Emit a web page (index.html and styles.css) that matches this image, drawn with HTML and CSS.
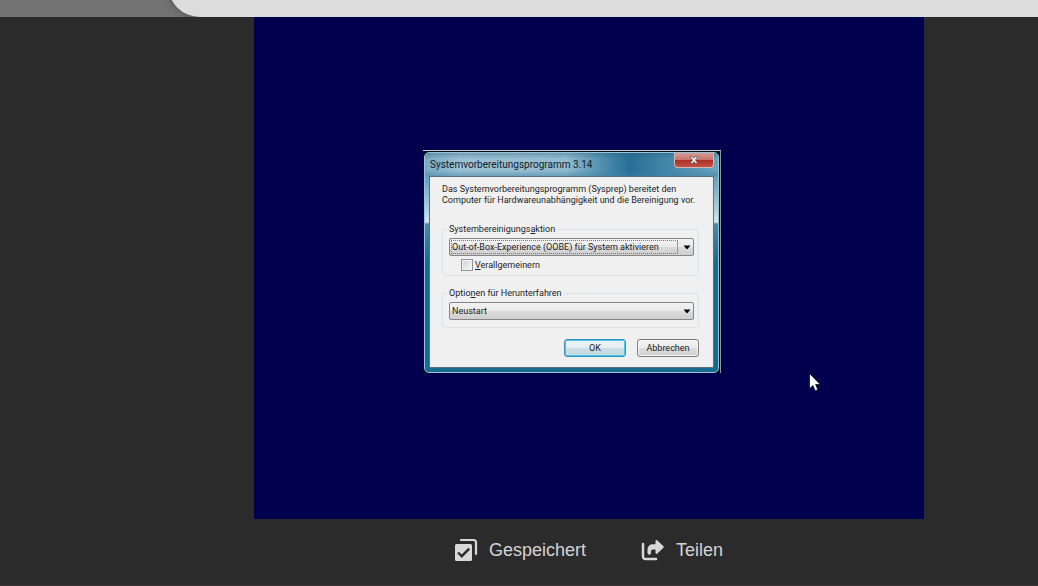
FILE: index.html
```html
<!DOCTYPE html>
<html lang="de">
<head>
<meta charset="utf-8">
<title>Systemvorbereitungsprogramm</title>
<link rel="stylesheet" href="styles.css">
</head>
<body>
<header class="topbar"><div class="topbar-sheet"></div></header>
<main class="stage">
  <section class="desktop">
    <div class="window-frame">
      <form class="window">
        <div class="titlebar">
          <h1 class="title">Systemvorbereitungsprogramm 3.14</h1>
          <button class="close" type="button" aria-label="Schließen">
            <svg width="10" height="8" viewBox="0 0 10 8"><path d="M1 .5h2.500L5 2.400 6.500.500H9L6.400 4 9 7.500H6.500L5 5.600 3.500 7.500H1L3.600 4z" fill="#fff" stroke="#5d4a50" stroke-width=".7"/></svg>
          </button>
        </div>
        <div class="client">
          <p class="intro">Das Systemvorbereitungsprogramm (Sysprep) bereitet den<br>Computer für Hardwareunabhängigkeit und die Bereinigung vor.</p>
          <fieldset class="group">
            <legend><label for="action">Systembereinigungs<u>a</u>ktion</label></legend>
            <div class="combo combo-focus">
              <select id="action"><option>Out-of-Box-Experience (OOBE) für System aktivieren</option></select>
              <svg class="arrow" width="8" height="5" viewBox="0 0 8 5"><path d="M.5.500h7L4 4.500z"/></svg>
            </div>
            <label class="check"><input type="checkbox"><span><u>V</u>erallgemeinern</span></label>
          </fieldset>
          <fieldset class="group group-shutdown">
            <legend><label for="shutdown">Optio<u>n</u>en für Herunterfahren</label></legend>
            <div class="combo">
              <select id="shutdown"><option>Neustart</option></select>
              <svg class="arrow" width="8" height="5" viewBox="0 0 8 5"><path d="M.5.500h7L4 4.500z"/></svg>
            </div>
          </fieldset>
          <div class="buttons">
            <button class="btn btn-default" type="button">OK</button>
            <button class="btn" type="button">Abbrechen</button>
          </div>
        </div>
      </form>
    </div>
    <svg class="cursor" width="12" height="19" viewBox="0 0 12 19"><path d="M.5.500v15.200l3.400-3.200 2.300 5.300 2.700-1.100-2.300-5.200h4.700z" fill="#fff" stroke="#000" stroke-width=".7"/></svg>
  </section>
</main>
<footer class="actions">
  <button class="action" type="button">
    <svg width="24" height="24" viewBox="0 0 24 24" fill="none"><path d="M7 2h12.500a2.500 2.500 0 0 1 2.500 2.500V16" stroke="#d8d8d8" stroke-width="2.200" stroke-linecap="round"/><rect x="1" y="6" width="17" height="17" rx="1.500" fill="#d8d8d8"/><path d="M4 14.500l3.800 3.700 7.400-7.600" stroke="#2b2b2b" stroke-width="2.400"/></svg>
    <span>Gespeichert</span>
  </button>
  <button class="action" type="button">
    <svg width="24" height="24" viewBox="0 0 24 24" fill="none"><path d="M2 6v12.500A2.500 2.500 0 0 0 4.500 21H15" stroke="#d8d8d8" stroke-width="2.500" stroke-linecap="round"/><path d="M14.500 3a1 1 0 0 1 1.600-.7l6.400 6a1 1 0 0 1 0 1.400l-6.400 6a1 1 0 0 1-1.600-.7v-3.500h-2.300c-1.600 0-2.200.7-2.200 2v1.500a1.500 1.500 0 0 1-3.500 0V12c0-3.700 2.300-5.700 5.700-5.700h2.300z" fill="#d8d8d8"/></svg>
    <span>Teilen</span>
  </button>
</footer>
</body>
</html>
```
FILE: styles.css
```css
* { box-sizing: border-box; }
body {
  margin: 0;
  min-height: 100vh;
  display: flex;
  flex-direction: column;
  background: #2b2b2b;
  border-bottom: 1px solid #3a3436;
  font-family: "Liberation Sans", Arial, sans-serif;
}
.topbar {
  height: 17px;
  padding-left: 168px;
  overflow: hidden;
  display: flex;
  align-items: flex-end;
  background: #737373;
}
.topbar-sheet {
  flex: 1;
  height: 64px;
  border-bottom-left-radius: 32px;
  background: #dcdcdc;
  box-shadow: 0 0 8px rgba(0, 0, 0, .3);
}
.stage {
  flex: 1;
  display: flex;
  padding: 0 114px 0 254px;
}
.desktop { flex: 1; position: relative; background: #00004c; }
.window-frame {
  position: absolute;
  left: 169px;
  top: 133px;
  width: 298px;
  padding: 1px 1px 0;
  border-top: 1px solid #c8d0d8;
  border-right: 1px solid #8d98a4;
  background: #001018;
}
.window {
  padding: 0 4px 4px;
  border: 1px solid #9cc4d4;
  border-radius: 5px;
  background:
    linear-gradient(180deg, #3c7896 0, #62a0bc 24px, #b9d5e2 60px, #d8e8f0 69px, #4c8ba8 71px, #176a90 110px, #176a90 100%);
  font-family: Roboto, "Noto Sans", sans-serif;
  font-size: 9px;
  line-height: 11px;
  color: #1c1c24;
}
.titlebar {
  height: 23px;
  margin: 0 -4px;
  padding-left: 5px;
  display: flex;
  justify-content: space-between;
  border-radius: 4px 4px 0 0;
  background:
    linear-gradient(180deg, rgba(30, 90, 120, .35) 0, rgba(30, 90, 120, 0) 6px, rgba(30, 90, 120, 0) 17px, rgba(60, 130, 165, .5) 100%),
    linear-gradient(90deg, #79a9c0 0, #9dc1d3 12%, #94bbcf 48%, #5290b0 60%, #286e94 70%, #3f82a5 80%, #6ba2bd 100%);
}
.title { margin: 0; font-size: 10px; font-weight: 400; line-height: 23px; color: #10202c; }
.close {
  width: 40px;
  height: 15px;
  margin-right: 4px;
  padding: 0;
  display: flex;
  align-items: center;
  justify-content: center;
  border: 1px solid #d9b6b4;
  border-top: 0;
  border-radius: 0 0 4px 4px;
  background: linear-gradient(#d49a93 0, #c9776e 48%, #a92f25 50%, #c25042 100%);
}
.client {
  padding: 7px 14px 10px 12px;
  border: 1px solid #54707e;
  background: #f0f0f0;
}
.intro { margin: 0 0 18px; white-space: nowrap; }
.group {
  min-width: 0;
  margin: 0;
  padding: 3px 4px 4px 6px;
  border: 1px solid #dbe4ea;
  border-radius: 3px;
}
.group legend { padding: 0 2px 0 0; }
.group-shutdown { margin-top: 12px; padding-bottom: 7px; }
.combo { position: relative; display: flex; }
.combo select {
  flex: 1;
  min-width: 0;
  height: 18px;
  padding: 0 18px 0 2px;
  appearance: none;
  border: 1px solid #858585;
  border-radius: 2px;
  background: linear-gradient(#f2f2f2 0, #ebebeb 48%, #dadada 52%, #cfcfcf 100%);
  color: inherit;
  font: inherit;
}
.combo-focus::after {
  content: "";
  position: absolute;
  inset: 2px 16px 2px 2px;
  border: 1px dotted #777;
  border-right: 1px solid #999;
  pointer-events: none;
}
.arrow { position: absolute; right: 3px; top: 7px; fill: #000; pointer-events: none; }
.check { display: flex; align-items: center; gap: 2px; margin: 3px 0 0 12px; }
.check input {
  width: 12px;
  height: 12px;
  margin: 0;
  appearance: none;
  border: 1px solid #929292;
  background: linear-gradient(135deg, #cfd3d6, #f6f6f6);
  box-shadow: inset 0 0 0 1px #f4f4f4;
}
.buttons { display: flex; justify-content: flex-end; gap: 11px; margin-top: 11px; }
.btn {
  width: 62px;
  height: 18px;
  padding: 0;
  border: 1px solid #7c7c7c;
  border-radius: 3px;
  background: linear-gradient(#f2f2f2 0, #ebebeb 48%, #dcdcdc 52%, #cfcfcf 100%);
  box-shadow: inset 0 0 0 1px #f8f8f8;
  color: inherit;
  font: inherit;
}
.btn-default {
  border-color: #3d8fb0;
  background: linear-gradient(#eef3f5 0, #e4edf0 48%, #ccdde3 52%, #c6dbe2 100%);
  box-shadow: inset 0 0 0 1px #45c8f0;
}
.cursor { position: absolute; left: 555px; top: 356px; }
.actions {
  height: 66px;
  padding: 0 0 4px 139px;
  display: flex;
  align-items: center;
  justify-content: center;
  gap: 55px;
}
.action {
  display: flex;
  align-items: center;
  gap: 11px;
  padding: 0;
  border: 0;
  background: none;
  color: #d4d4d4;
  font: inherit;
  font-size: 18px;
}
```
